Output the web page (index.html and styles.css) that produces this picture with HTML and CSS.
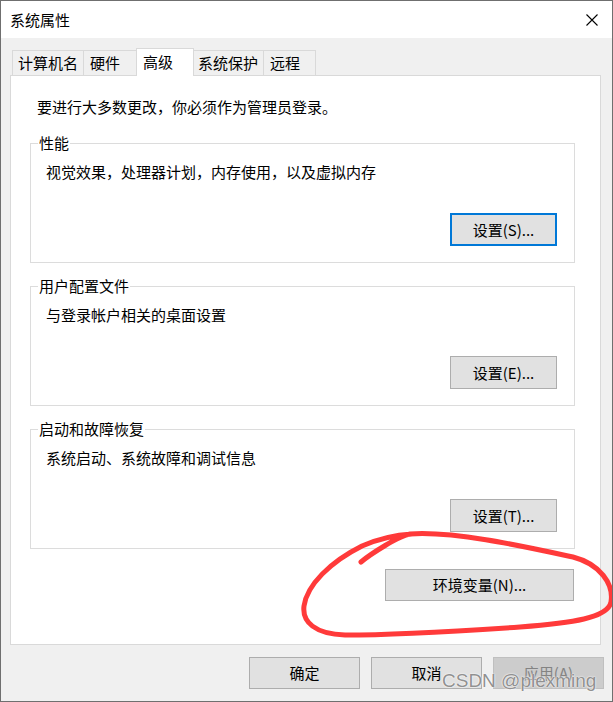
FILE: index.html
```html
<!DOCTYPE html>
<html lang="zh-CN">
<head>
<meta charset="utf-8">
<title>系统属性</title>
<link rel="stylesheet" href="styles.css">
</head>
<body>
<div class="window">
  <div class="titlebar">
    <span class="title">系统属性</span>
    <svg class="close" width="12" height="12" viewBox="0 0 12 12"><path d="M0.5 0.5 L11.5 11.5 M11.5 0.5 L0.5 11.5" stroke="#000" stroke-width="1.1" fill="none"/></svg>
  </div>
  <div class="content">
    <div class="tabs">
      <div class="tab t1">计算机名</div>
      <div class="tab t2">硬件</div>
      <div class="tab t3 active">高级</div>
      <div class="tab t4">系统保护</div>
      <div class="tab t5">远程</div>
    </div>
    <div class="panel">
      <p class="note">要进行大多数更改，你必须作为管理员登录。</p>
      <fieldset class="group">
        <legend>性能</legend>
        <p class="desc">视觉效果，处理器计划，内存使用，以及虚拟内存</p>
        <div class="btn-row"><button class="btn default">设置(S)...</button></div>
      </fieldset>
      <fieldset class="group">
        <legend>用户配置文件</legend>
        <p class="desc">与登录帐户相关的桌面设置</p>
        <div class="btn-row"><button class="btn">设置(E)...</button></div>
      </fieldset>
      <fieldset class="group">
        <legend>启动和故障恢复</legend>
        <p class="desc">系统启动、系统故障和调试信息</p>
        <div class="btn-row"><button class="btn">设置(T)...</button></div>
      </fieldset>
      <div class="env-row"><button class="btn env">环境变量(N)...</button></div>
    </div>
    <div class="actions">
      <button class="btn action">确定</button>
      <button class="btn action">取消</button>
      <button class="btn action disabled">应用(A)</button>
    </div>
  </div>
  <svg class="scribble" width="613" height="702" viewBox="0 0 613 702">
    <path d="M361 562 C368 556, 376 551, 386 545 C395 540, 400 536, 410 534 C455 531, 522 546, 573 557 C600 564, 614 584, 611 602 C608 618, 572 623, 520 627 C460 631, 400 635, 345 635 C315 634, 302 622, 304 606 C307 585, 330 562, 362 546 C378 539, 395 535, 412 534" stroke="#ff3a3a" stroke-width="5" fill="none" stroke-linecap="round" stroke-linejoin="round"/>
  </svg>
  <div class="watermark">CSDN @plexming</div>
</div>
</body>
</html>
```

FILE: styles.css
```css
* {
  box-sizing: border-box;
}

html, body {
  margin: 0;
  padding: 0;
  background: #ffffff;
}

body {
  font-family: "Noto Sans CJK SC", "Noto Sans", sans-serif;
  font-size: 15px;
  line-height: 20px;
  color: #000;
}

.window {
  position: relative;
  width: 613px;
  height: 702px;
  border: 1px solid #6f6f6f;
  display: flex;
  flex-direction: column;
  background: #f0f0f0;
  overflow: hidden;
}

.titlebar {
  height: 37px;
  flex: none;
  background: #ffffff;
  display: flex;
  align-items: center;
  justify-content: space-between;
  padding: 0 14px 0 9px;
}

.title {
  font-size: 15px;
  line-height: 20px;
}

.close {
  display: block;
}

.content {
  flex: 1;
  background: #f0f0f0;
  padding-top: 10px;
  display: flex;
  flex-direction: column;
}

.tabs {
  display: flex;
  align-items: flex-end;
  margin-left: 11px;
  position: relative;
  z-index: 1;
}

.tab {
  height: 25px;
  border: 1px solid #d9d9d9;
  border-bottom: none;
  background: #f0f0f0;
  padding-left: 5px;
  display: flex;
  align-items: center;
  margin-left: -1px;
  white-space: nowrap;
}

.tab.t1 { width: 72px; margin-left: 0; }
.tab.t2 { width: 54px; padding-left: 6px; }
.tab.t3 { width: 58px; padding-left: 6px; }
.tab.t4 { width: 71px; padding-left: 4px; }
.tab.t5 { width: 53px; padding-left: 6px; }

.tab.active {
  height: 28px;
  margin-bottom: -1px;
  background: #ffffff;
  padding-bottom: 2px;
}

.panel {
  margin-left: 9px;
  width: 591px;
  height: 570px;
  flex: none;
  background: #ffffff;
  border: 1px solid #d9d9d9;
  padding-top: 21px;
  display: flex;
  flex-direction: column;
}

.note {
  margin: 0 0 16px 0;
  padding-left: 26px;
}

.group {
  margin: 0 0 0 19px;
  width: 545px;
  border: 1px solid #dcdcdc;
  padding: 9px 17px 16px 15px;
  min-width: 0;
}

.group + .group {
  margin-top: 13px;
}

.group legend {
  padding: 0 1px;
  margin-left: -8px;
  line-height: 20px;
}

.desc {
  margin: 0;
}

.btn-row {
  display: flex;
  justify-content: flex-end;
  margin-top: 31px;
}

.btn {
  font-family: "Noto Sans CJK SC", "Noto Sans", sans-serif;
  font-size: 15px;
  line-height: 20px;
  color: #000;
  background: #e1e1e1;
  border: 1px solid #adadad;
  border-radius: 0;
  padding: 0;
  width: 107px;
  height: 33px;
  display: flex;
  align-items: center;
  justify-content: center;
}

.btn.default {
  border: 2px solid #0078d7;
}

.env-row {
  display: flex;
  justify-content: flex-end;
  margin-top: 20px;
  padding-right: 26px;
}

.btn.env {
  width: 189px;
  height: 32px;
}

.actions {
  display: flex;
  justify-content: flex-end;
  gap: 11px;
  margin-top: 12px;
  padding-right: 8px;
}

.btn.action {
  width: 111px;
  height: 32px;
}

.btn.disabled {
  background: #cccccc;
  border-color: #bfbfbf;
  color: #838383;
}

.scribble {
  position: absolute;
  left: -1px;
  top: -1px;
  pointer-events: none;
}

.watermark {
  position: absolute;
  left: 441px;
  top: 669px;
  font-family: "Liberation Sans", Arial, sans-serif;
  font-size: 19px;
  line-height: 22px;
  color: rgba(115, 115, 115, 0.8);
  text-shadow: 0 0 1px #ffffff, 0 0 2px #ffffff;
  white-space: nowrap;
  pointer-events: none;
}
```
